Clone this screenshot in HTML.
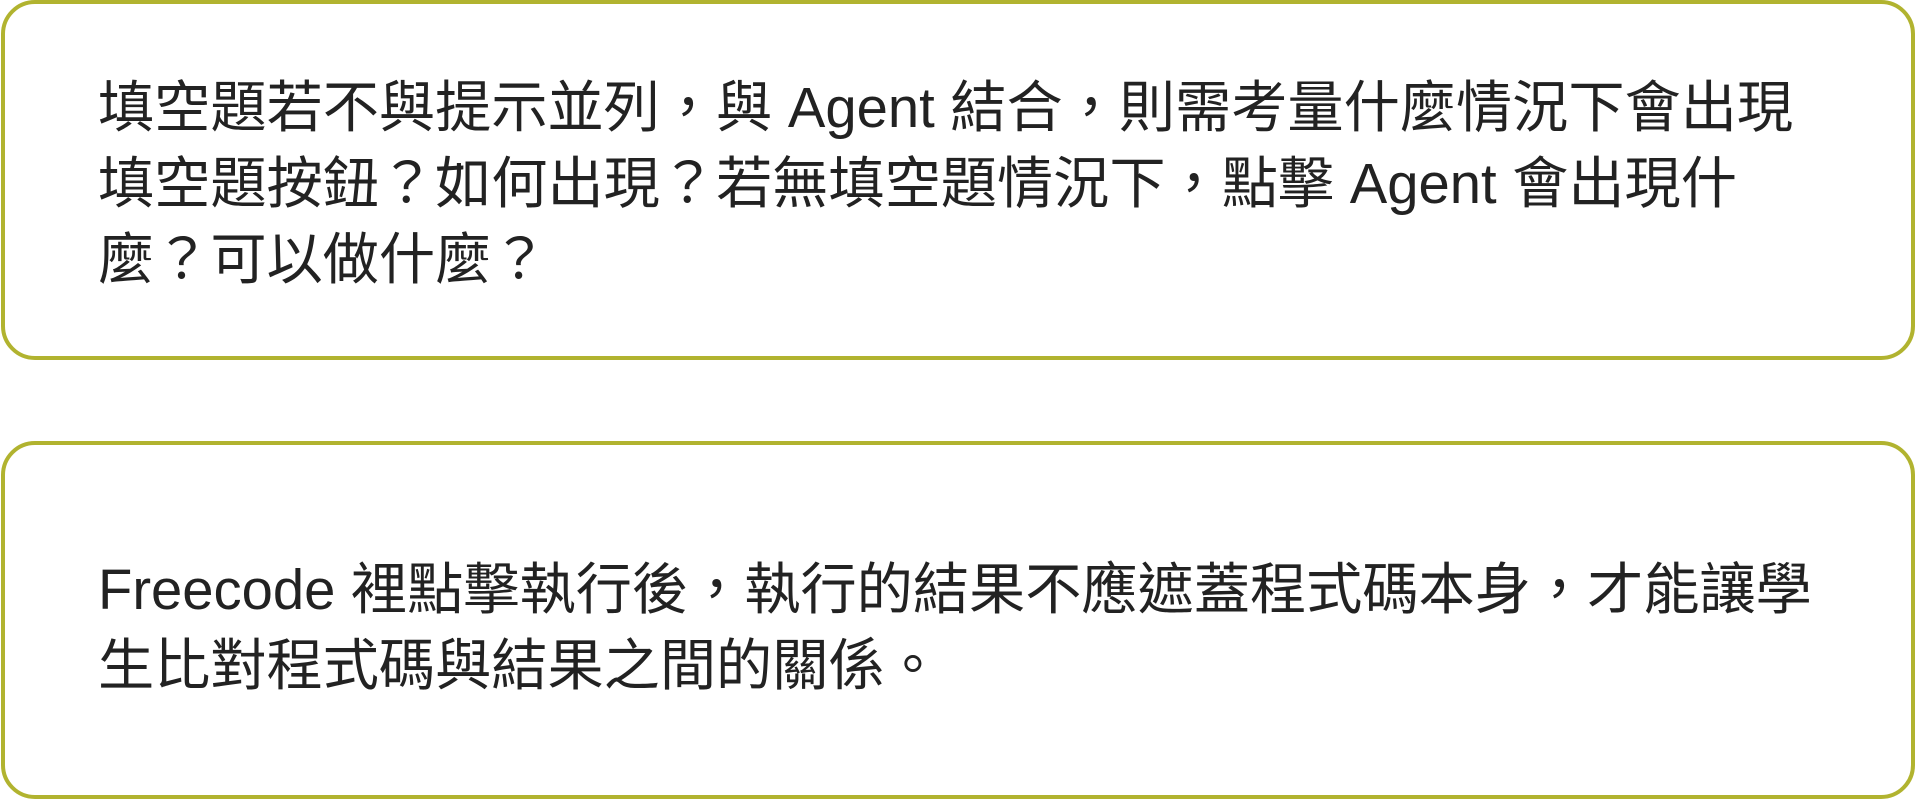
<!DOCTYPE html>
<html><head><meta charset="utf-8"><style>
html,body{margin:0;padding:0;background:#fff;width:1916px;height:800px;overflow:hidden}
.box{position:absolute;left:1px;width:1914px;border:4px solid #b1b32f;border-radius:34px;box-sizing:border-box}
.t{position:absolute;left:98px;font-family:"Liberation Sans","Noto Sans CJK TC",sans-serif;font-size:56.2px;line-height:76px;color:#222;white-space:nowrap}
</style></head><body>
<div class="box" style="top:0;height:360px"></div>
<div class="box" style="top:441px;height:358px"></div>
<div class="t" style="top:70px">填空題若不與提示並列，與 Agent 結合，則需考量什麼情況下會出現<br>填空題按鈕？如何出現？若無填空題情況下，點擊 Agent 會出現什<br>麼？可以做什麼？</div>
<div class="t" style="top:552px">Freecode 裡點擊執行後，執行的結果不應遮蓋程式碼本身，才能讓學<br>生比對程式碼與結果之間的關係。</div>
</body></html>
